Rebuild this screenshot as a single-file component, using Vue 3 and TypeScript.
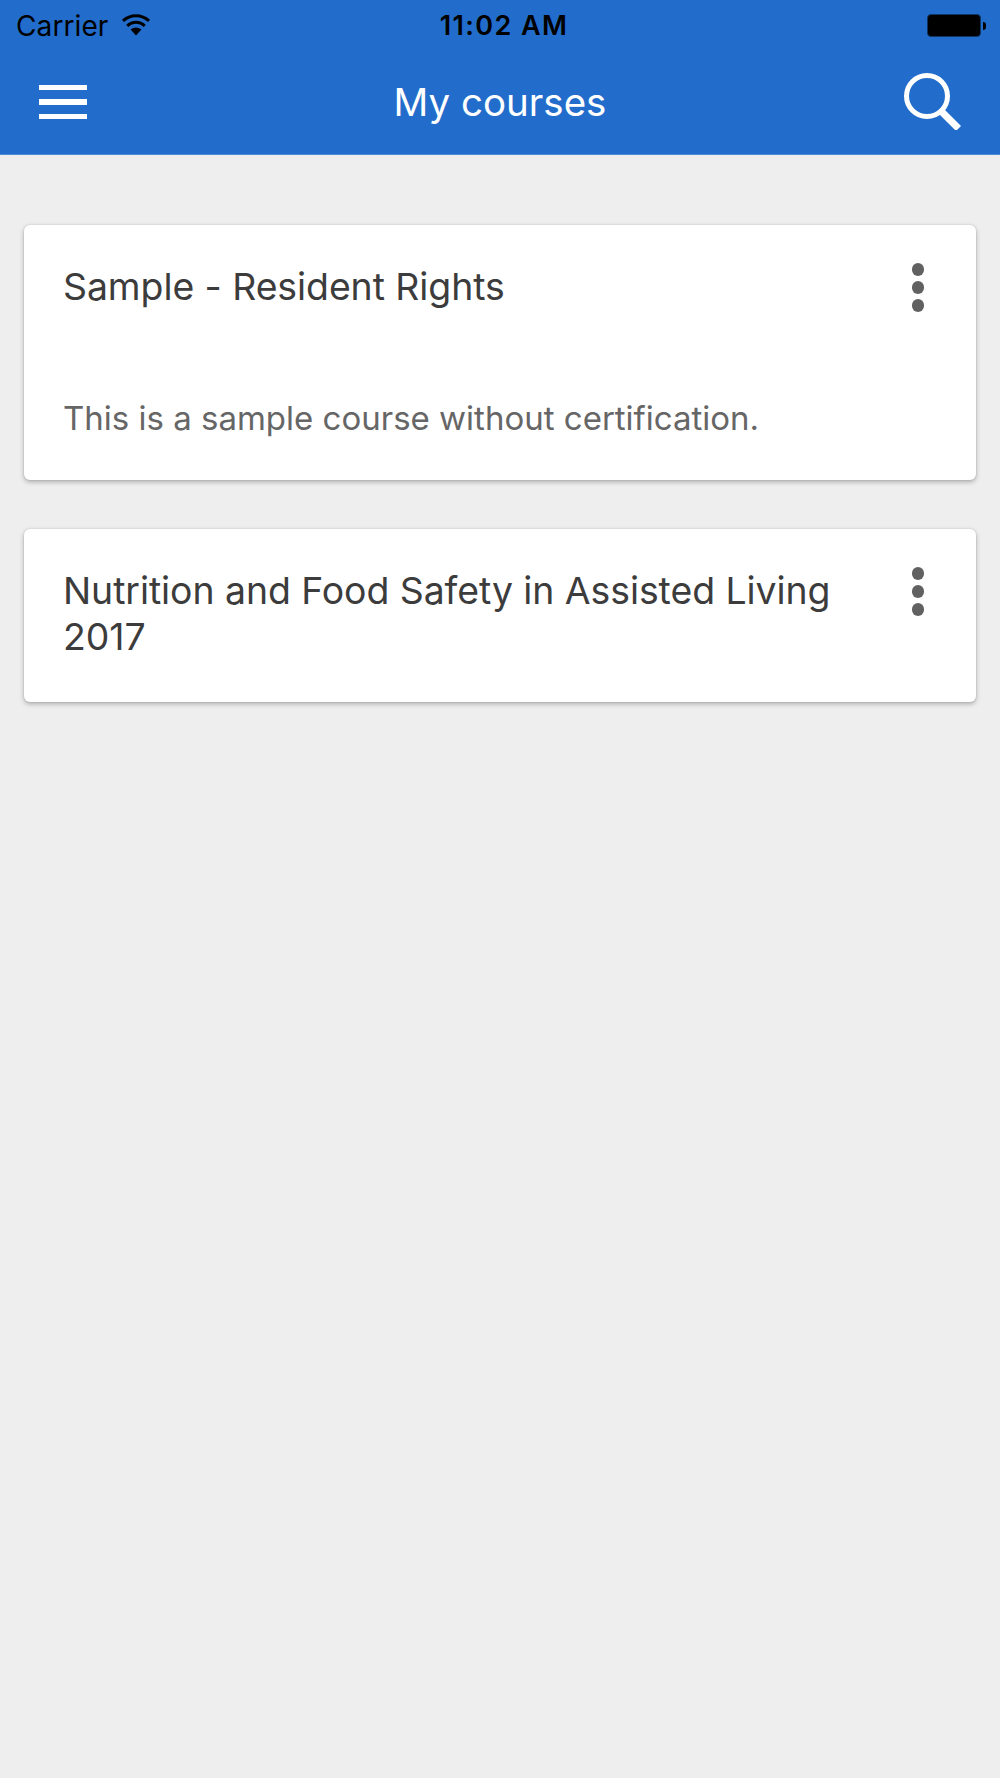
<script setup lang="ts">
interface Course { title: string; summary?: string }
const courses: Course[] = [
  { title: 'Sample - Resident Rights', summary: 'This is a sample course without certification.' },
  { title: 'Nutrition and Food Safety in Assisted Living 2017' },
]
</script>

<template>
  <div class="page">
    <header class="header">
      <div class="status">
        <div class="status-left">
          <span class="carrier">Carrier</span>
          <svg class="wifi" width="30" height="22" viewBox="0 0 30 22">
            <path d="M15 21.5 L9.6 15.6 A8 8 0 0 1 20.4 15.6 Z" fill="#000" />
            <path d="M6.2 11.8 A13 13 0 0 1 23.8 11.8" fill="none" stroke="#000" stroke-width="3" />
            <path d="M2 6.8 A19 19 0 0 1 28 6.8" fill="none" stroke="#000" stroke-width="3" />
          </svg>
        </div>
        <span class="time">11:02 AM</span>
        <div class="battery">
          <div class="battery-body"></div>
          <div class="battery-tip"></div>
        </div>
      </div>
      <div class="toolbar">
        <button class="icon-btn" aria-label="Menu">
          <span class="bar"></span><span class="bar"></span><span class="bar"></span>
        </button>
        <h1 class="title">My courses</h1>
        <button class="icon-btn search" aria-label="Search">
          <svg width="60" height="60" viewBox="0 0 60 60">
            <circle cx="26" cy="26" r="20.5" fill="none" stroke="#fff" stroke-width="5" />
            <path d="M41 42 L57.5 58.5" stroke="#fff" stroke-width="7" fill="none" />
          </svg>
        </button>
      </div>
    </header>

    <main class="list">
      <article v-for="c in courses" :key="c.title" class="card">
        <div class="card-head">
          <h2 class="card-title">{{ c.title }}</h2>
          <div class="dots"><i></i><i></i><i></i></div>
        </div>
        <p v-if="c.summary" class="summary">{{ c.summary }}</p>
      </article>
    </main>
  </div>
</template>

<style>
html, body { margin: 0; background: #eeeeee; }
</style>

<style scoped>
.page {
  width: 1000px;
  height: 1778px;
  background: #eeeeee;
  font-family: Inter, "Noto Sans", sans-serif;
  overflow: hidden;
}
.header {
  background: #226dcb;
  height: 154px;
  border-bottom: 1px solid #4d8ad6;
  display: flex;
  flex-direction: column;
}
.status {
  height: 50px;
  display: grid;
  grid-template-columns: 1fr auto 1fr;
  align-items: center;
  padding: 0 14px 0 16px;
  color: #000;
}
.status-left { display: flex; align-items: center; gap: 13px; }
.carrier { font-size: 28px; line-height: 50px; letter-spacing: 0.1px; }
.wifi { margin-top: -2px; }
.time { font-size: 27px; font-weight: 600; line-height: 50px; letter-spacing: 1.4px; padding: 1px 0 0 6px; }
.battery { display: flex; align-items: center; justify-content: flex-end; gap: 2px; }
.battery-body {
  width: 54px;
  height: 23px;
  box-sizing: border-box;
  background: #000;
  border: 1px solid #0f3563;
  border-radius: 4px;
}
.battery-tip {
  width: 3px;
  height: 8px;
  background: #000;
  border-radius: 0 3px 3px 0;
}
.toolbar {
  flex: 1;
  display: grid;
  grid-template-columns: 1fr auto 1fr;
  align-items: center;
  padding: 0 39px;
}
.icon-btn {
  background: none;
  border: 0;
  padding: 0;
  display: flex;
  flex-direction: column;
  gap: 9px;
  justify-self: start;
}
.bar { display: block; width: 48px; height: 5.5px; background: #fff; }
.search { justify-self: end; margin-bottom: 4px; }
.title {
  margin: 0;
  color: #fff;
  font-size: 38.5px;
  font-weight: 400;
  line-height: 44px;
}
.list {
  padding: 70px 24px 0;
  display: flex;
  flex-direction: column;
  gap: 49px;
}
.card {
  background: #fff;
  border-radius: 6px;
  box-shadow: 0 2px 5px rgba(0, 0, 0, 0.28), 0 0 2px rgba(0, 0, 0, 0.12);
  padding: 39px 52px 42px 39px;
}
.card-head {
  display: flex;
  align-items: flex-start;
  justify-content: space-between;
  gap: 40px;
}
.card-title {
  margin: 0;
  color: #3c3c3c;
  font-size: 37.4px;
  font-weight: 400;
  line-height: 46px;
  letter-spacing: -0.06px;
}
.dots {
  flex: none;
  display: flex;
  flex-direction: column;
  gap: 5.7px;
  margin: -1px 0 -3px;
}
.dots i { display: block; width: 12.5px; height: 12.5px; border-radius: 50%; background: #616161; }
.summary {
  margin: 88px 0 0;
  color: #666;
  font-size: 33px;
  line-height: 40px;
}
</style>
